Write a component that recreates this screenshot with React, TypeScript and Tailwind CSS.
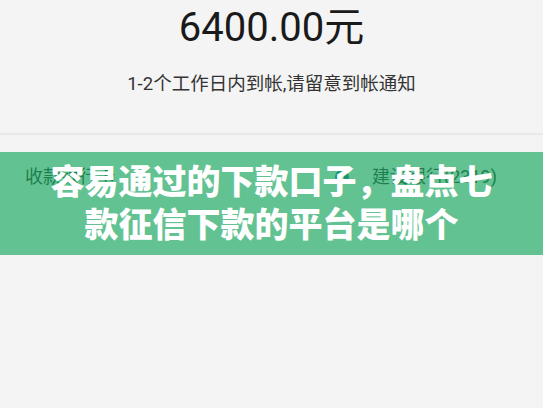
export default function App() {
  return (
    <div className="w-[543px] h-[408px] overflow-hidden bg-[#f4f4f4] font-['Roboto','Noto_Sans_CJK_SC',sans-serif]">
      {/* 金額 */}
      <div className="flex flex-col items-center pt-[4px] h-[133px]">
        <div className="text-[40px] leading-[48px] text-[#1a1a1a]">6400.00元</div>
        <div className="mt-[20px] text-[18.5px] leading-[24px] text-[#333]">1-2个工作日内到帐,请留意到帐通知</div>
      </div>
      <div className="h-[2px] bg-[#e9e9e9]" />

      {/* 收款銀行卡 + 標題遮罩 */}
      <div className="relative mt-[17px]">
        <div className="flex items-start justify-between h-[103px] pl-[25px] pr-[46px] pt-[13px] text-[18px] leading-[24px] text-[#2a2a2a]">
          <span>收款银行卡</span>
          <div className="flex items-center gap-[22px]">
            <svg width="16" height="16" viewBox="0 0 16 16">
              <circle cx="8" cy="8" r="7" fill="#1a6c8c" />
              <rect x="6" y="5" width="4" height="6" fill="#f4f4f4" />
            </svg>
            <span>建设银行(2319)</span>
          </div>
        </div>
        <div className="absolute inset-0 bg-[rgba(27,168,97,0.67)] flex items-center justify-center px-[40px]">
          <div className="text-center text-white font-black text-[34px] leading-[43px]">
            容易通过的下款口子，盘点七款征信下款的平台是哪个
          </div>
        </div>
      </div>
    </div>
  )
}
